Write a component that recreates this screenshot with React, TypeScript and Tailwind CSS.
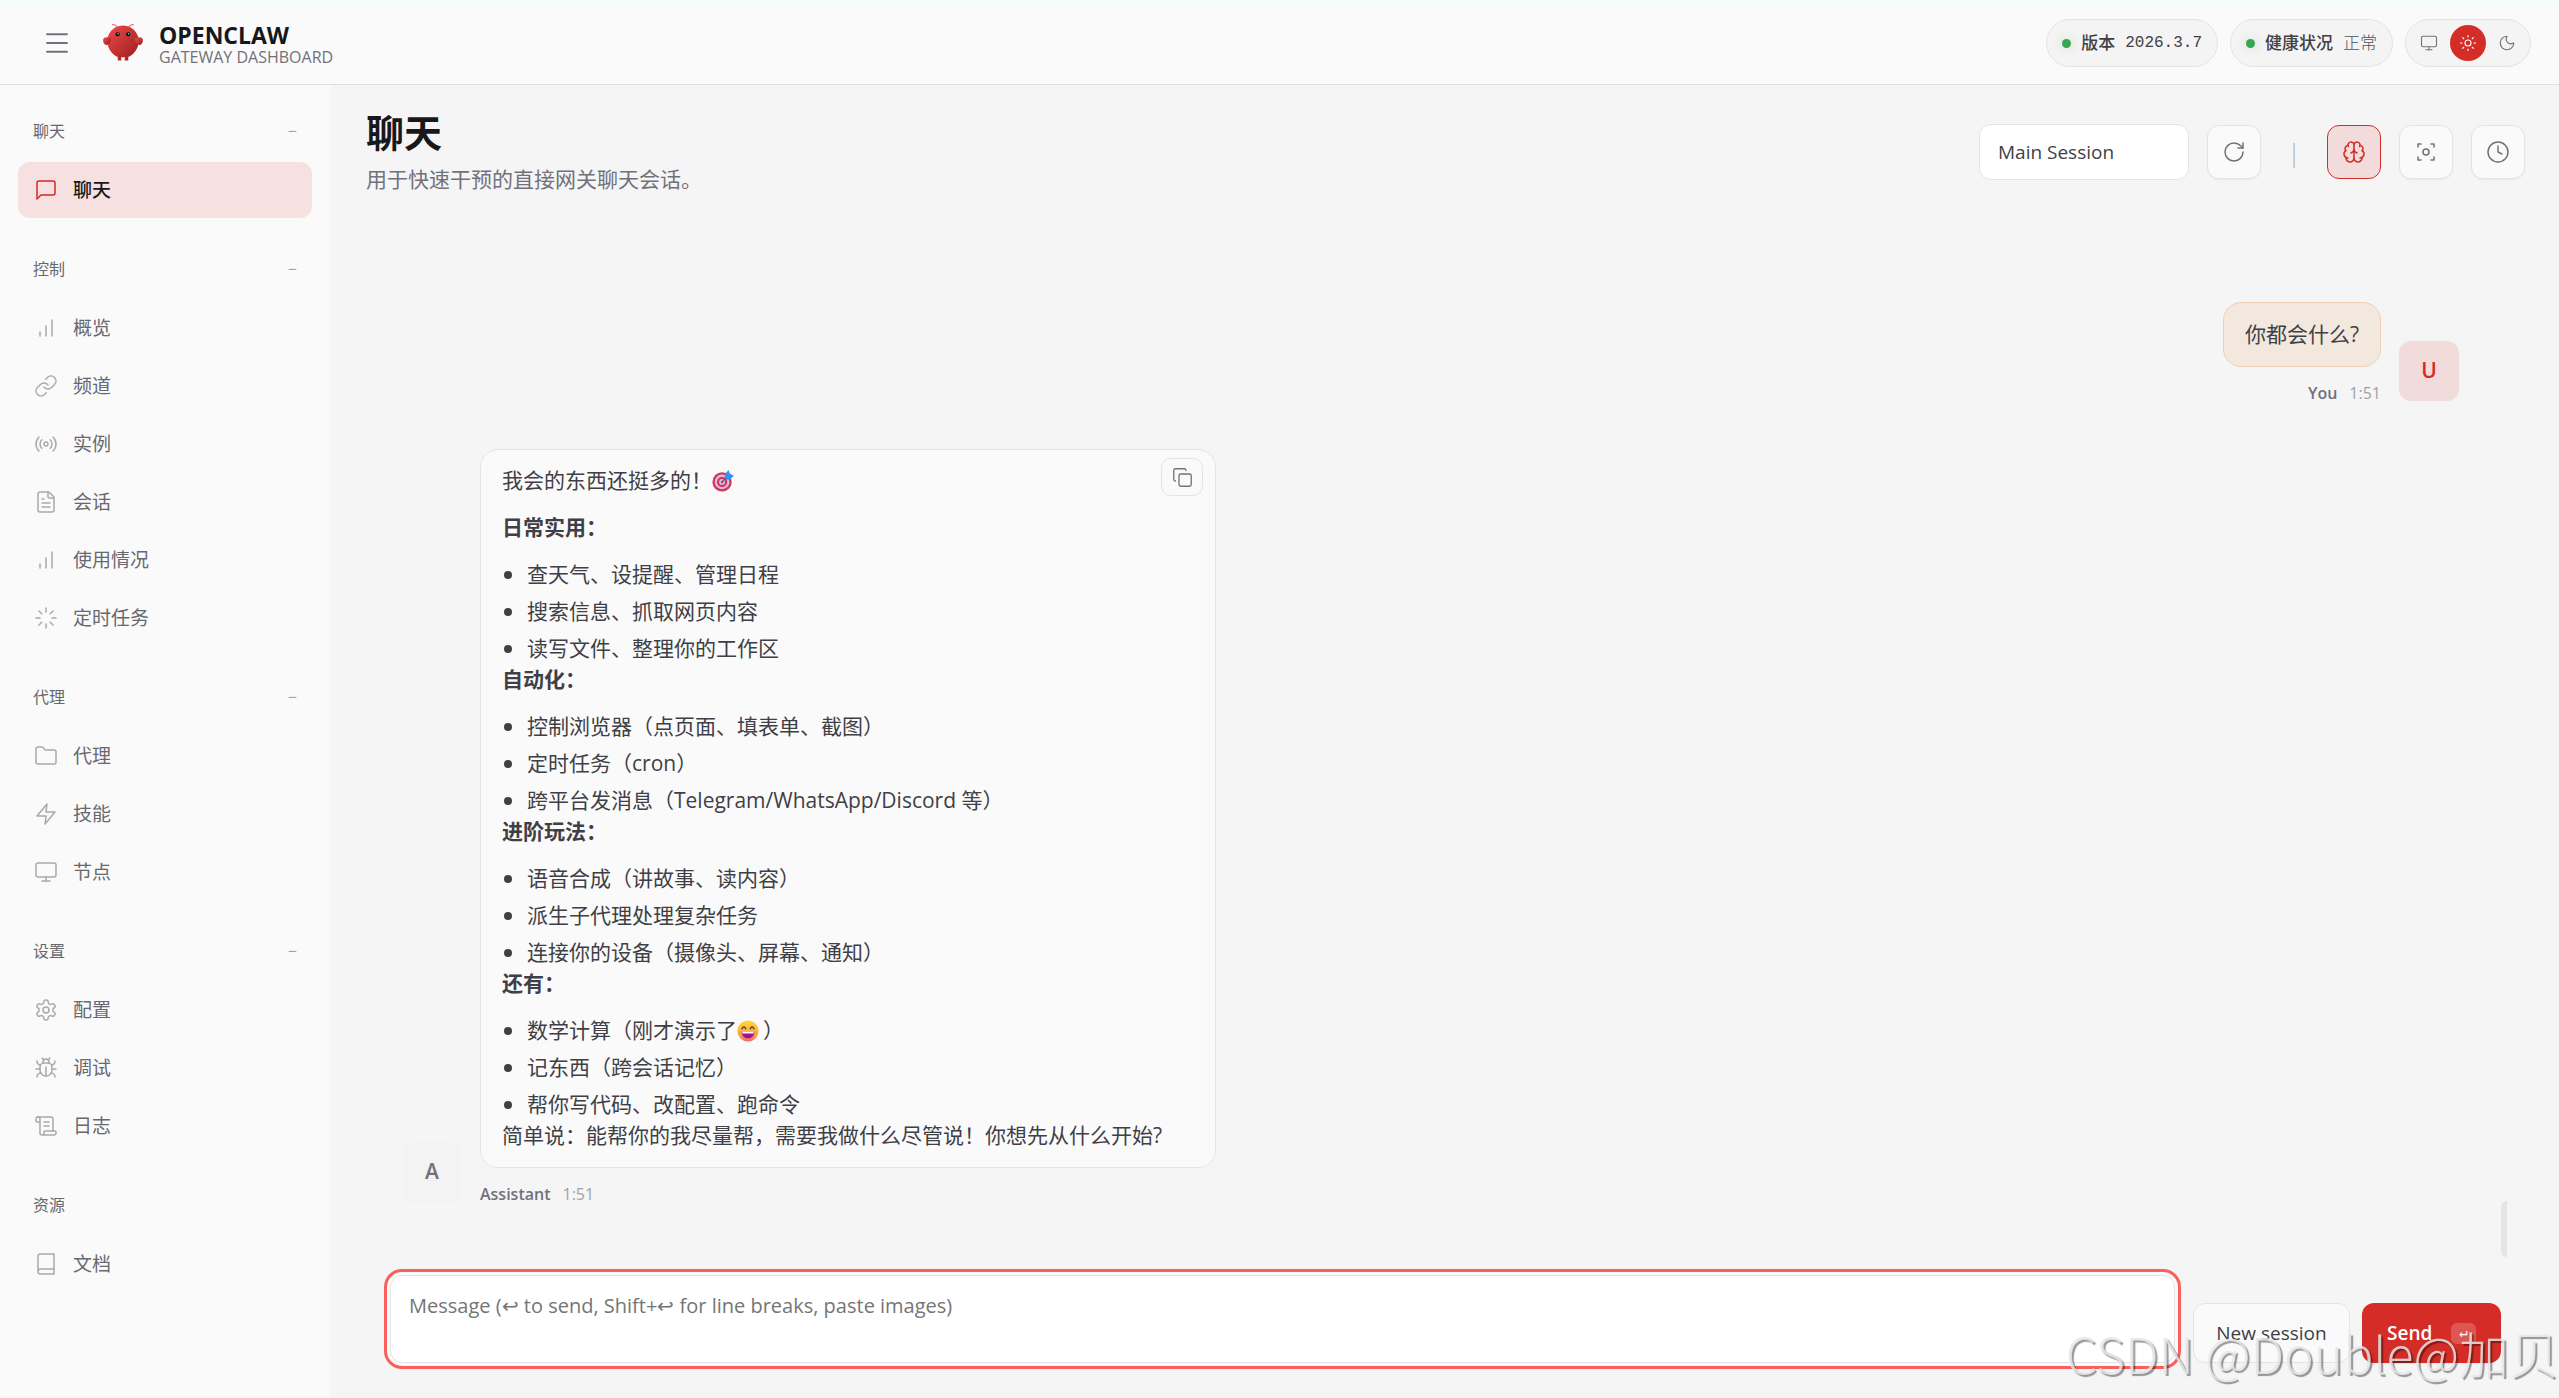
import { useState, type ReactNode } from "react";
import {
  Brain,
  Bug,
  Clock,
  Copy,
  FileText,
  Folder,
  Link,
  Menu,
  Monitor,
  Moon,
  RotateCw,
  ScrollText,
} from "lucide-react";

type IconProps = { className?: string };

function Stroke({ className, children }: IconProps & { children: ReactNode }) {
  return (
    <svg
      viewBox="0 0 24 24"
      fill="none"
      stroke="currentColor"
      strokeWidth={1.5}
      strokeLinecap="round"
      strokeLinejoin="round"
      className={className}
      aria-hidden="true"
    >
      {children}
    </svg>
  );
}

const ChatIcon = (p: IconProps) => (
  <Stroke {...p}>
    <path d="M21 15a2 2 0 0 1-2 2H7l-4 4V5a2 2 0 0 1 2-2h14a2 2 0 0 1 2 2z" />
  </Stroke>
);
const BarsIcon = (p: IconProps) => (
  <Stroke {...p}>
    <path d="M12 20V10M18 20V4M6 20v-4" />
  </Stroke>
);
const LinkIcon = (p: IconProps) => <Link strokeWidth={1.5} {...p} />;
const RadioIcon = (p: IconProps) => (
  <Stroke {...p}>
    <circle cx="12" cy="12" r="2" />
    <path d="M16.24 7.76a6 6 0 0 1 0 8.49m-8.48-.01a6 6 0 0 1 0-8.49m11.31-2.82a10 10 0 0 1 0 14.14m-14.14 0a10 10 0 0 1 0-14.14" />
  </Stroke>
);
const FileIcon = (p: IconProps) => <FileText strokeWidth={1.5} {...p} />;
const LoaderIcon = (p: IconProps) => (
  <Stroke {...p}>
    <path d="M12 2v4M12 18v4M4.93 4.93l2.83 2.83M16.24 16.24l2.83 2.83M2 12h4M18 12h4M4.93 19.07l2.83-2.83M16.24 7.76l2.83-2.83" />
  </Stroke>
);
const FolderIcon = (p: IconProps) => <Folder strokeWidth={1.5} {...p} />;
const ZapIcon = (p: IconProps) => (
  <Stroke {...p}>
    <path d="M13 2 3 14h9l-1 8 10-12h-9z" />
  </Stroke>
);
const MonitorIcon = (p: IconProps) => <Monitor strokeWidth={1.5} {...p} />;
const GearIcon = (p: IconProps) => (
  <Stroke {...p}>
    <path d="M12.22 2h-.44a2 2 0 0 0-2 2v.18a2 2 0 0 1-1 1.73l-.43.25a2 2 0 0 1-2 0l-.15-.08a2 2 0 0 0-2.73.73l-.22.38a2 2 0 0 0 .73 2.73l.15.1a2 2 0 0 1 1 1.72v.51a2 2 0 0 1-1 1.74l-.15.09a2 2 0 0 0-.73 2.73l.22.38a2 2 0 0 0 2.73.73l.15-.08a2 2 0 0 1 2 0l.43.25a2 2 0 0 1 1 1.73V20a2 2 0 0 0 2 2h.44a2 2 0 0 0 2-2v-.18a2 2 0 0 1 1-1.73l.43-.25a2 2 0 0 1 2 0l.15.08a2 2 0 0 0 2.73-.73l.22-.39a2 2 0 0 0-.73-2.73l-.15-.08a2 2 0 0 1-1-1.74v-.5a2 2 0 0 1 1-1.74l.15-.09a2 2 0 0 0 .73-2.73l-.22-.38a2 2 0 0 0-2.73-.73l-.15.08a2 2 0 0 1-2 0l-.43-.25a2 2 0 0 1-1-1.73V4a2 2 0 0 0-2-2z" />
    <circle cx="12" cy="12" r="3" />
  </Stroke>
);
const BugIcon = (p: IconProps) => <Bug strokeWidth={1.5} {...p} />;
const ScrollIcon = (p: IconProps) => <ScrollText strokeWidth={1.5} {...p} />;
const BookIcon = (p: IconProps) => (
  <Stroke {...p}>
    <path d="M4 19.5v-15A2.5 2.5 0 0 1 6.5 2H20v20H6.5a2.5 2.5 0 0 1 0-5H20" />
  </Stroke>
);

function Logo() {
  return (
    <svg viewBox="0 0 120 120" className="size-[42px]" aria-hidden="true">
      <defs>
        <linearGradient id="shell" x1="0%" y1="0%" x2="100%" y2="100%">
          <stop offset="0%" stopColor="#f04a4a" />
          <stop offset="100%" stopColor="#991b1b" />
        </linearGradient>
      </defs>
      <path
        d="M60 10C30 10 15 35 15 55s15 40 30 45v10h10v-10s5 2 10 0v10h10v-10c15-5 30-25 30-45S90 10 60 10Z"
        fill="url(#shell)"
      />
      <path d="M20 45C5 40 0 50 5 60s15 5 20-5c3-7 0-10-5-10Z" fill="url(#shell)" />
      <path d="M100 45c15-5 20 5 15 15s-15 5-20-5c-3-7 0-10 5-10Z" fill="url(#shell)" />
      <path
        d="M45 15Q35 5 30 8M75 15Q85 5 90 8"
        stroke="#f0605f"
        strokeWidth="3"
        strokeLinecap="round"
        fill="none"
      />
      <circle cx="45" cy="35" r="6" fill="#050810" />
      <circle cx="75" cy="35" r="6" fill="#050810" />
      <circle cx="46" cy="34" r="2.5" fill="#00e5cc" />
      <circle cx="76" cy="34" r="2.5" fill="#00e5cc" />
    </svg>
  );
}

function TargetEmoji() {
  return (
    <svg viewBox="0 0 24 24" className="inline-block size-[22px] align-[-4px]" role="img" aria-label="靶心">
      <circle cx="11" cy="13" r="10.5" fill="#d8315b" />
      <circle cx="11" cy="13" r="8" fill="#cfc6dc" />
      <circle cx="11" cy="13" r="5.6" fill="#d8315b" />
      <circle cx="11" cy="13" r="3.2" fill="#cfc6dc" />
      <circle cx="11" cy="13" r="1.4" fill="#d8315b" />
      <path d="M11 13 18 6" stroke="#5b4b8a" strokeWidth="1.4" />
      <path d="m14 8 .5-4L18 0l1 3 1.500 1.500L24 6l-4 4-4 .5z" fill="#3b8ef0" />
    </svg>
  );
}

function GrinEmoji() {
  return (
    <svg viewBox="0 0 24 24" className="mr-1 inline-block size-[22px] align-[-4px]" role="img" aria-label="大笑">
      <defs>
        <linearGradient id="face" x1="0" y1="0" x2="0" y2="1">
          <stop offset="0" stopColor="#ffd83b" />
          <stop offset="0.700" stopColor="#fba13a" />
          <stop offset="1" stopColor="#ee6a6a" />
        </linearGradient>
      </defs>
      <circle cx="12" cy="12" r="11.500" fill="url(#face)" />
      <path
        d="M5.500 9.500Q7.500 5.500 9.500 9.500M14.500 9.500Q16.500 5.500 18.500 9.500"
        stroke="#4b2e3a"
        strokeWidth="1.500"
        strokeLinecap="round"
        fill="none"
      />
      <path d="M5 12.500h14c0 4.500-3 7.500-7 7.500s-7-3-7-7.500Z" fill="#a30f9c" />
      <path d="M5.500 12.500h13l-.5 2.300H6z" fill="#fff" />
    </svg>
  );
}

type NavItem = { label: string; icon: (p: IconProps) => ReactNode; active?: boolean };
type NavGroup = { label: string; collapsible: boolean; items: NavItem[] };

const NAV: NavGroup[] = [
  { label: "聊天", collapsible: true, items: [{ label: "聊天", icon: ChatIcon, active: true }] },
  {
    label: "控制",
    collapsible: true,
    items: [
      { label: "概览", icon: BarsIcon },
      { label: "频道", icon: LinkIcon },
      { label: "实例", icon: RadioIcon },
      { label: "会话", icon: FileIcon },
      { label: "使用情况", icon: BarsIcon },
      { label: "定时任务", icon: LoaderIcon },
    ],
  },
  {
    label: "代理",
    collapsible: true,
    items: [
      { label: "代理", icon: FolderIcon },
      { label: "技能", icon: ZapIcon },
      { label: "节点", icon: MonitorIcon },
    ],
  },
  {
    label: "设置",
    collapsible: true,
    items: [
      { label: "配置", icon: GearIcon },
      { label: "调试", icon: BugIcon },
      { label: "日志", icon: ScrollIcon },
    ],
  },
  { label: "资源", collapsible: false, items: [{ label: "文档", icon: BookIcon }] },
];

function Sidebar() {
  return (
    <nav className="flex w-[330px] shrink-0 flex-col gap-[34px] bg-[#fafafa] px-[18px] pt-[29px]">
      {NAV.map((group) => (
        <section key={group.label} className="flex flex-col gap-3.5">
          {group.collapsible ? (
            <button
              type="button"
              className="flex h-[34px] items-center justify-between px-[15px] text-base text-[#68686f]"
            >
              <span>{group.label}</span>
              <span className="text-[#a1a1aa]">−</span>
            </button>
          ) : (
            <div className="flex h-[34px] items-center px-[15px] text-base text-[#68686f]">{group.label}</div>
          )}
          <div className="flex flex-col gap-0.5">
            {group.items.map(({ label, icon: Icon, active }) => (
              <a
                key={label}
                href="#"
                className={
                  active
                    ? "flex h-14 items-center gap-[15px] rounded-xl bg-[#f6e1e0] px-4 text-[19px] font-medium text-[#18181b]"
                    : "flex h-14 items-center gap-[15px] rounded-xl px-4 text-[19px] text-[#68686f]"
                }
              >
                <Icon className={active ? "size-6 text-[#dc2626]" : "size-6 text-[#a9a9ae]"} />
                {label}
              </a>
            ))}
          </div>
        </section>
      ))}
    </nav>
  );
}

function Topbar() {
  return (
    <header className="flex h-[85px] shrink-0 items-center justify-between border-b border-[#e0e0e2] bg-[#fafafa] pt-0.5 pr-7 pl-[42px] shadow-[inset_0_1px_0_#effdfd]">
      <div className="flex items-center">
        <button type="button" aria-label="菜单" className="text-[#71717a]">
          <Menu className="size-[30px]" strokeWidth={1.5} />
        </button>
        <div className="ml-[30px] flex items-center gap-[15px]">
          <Logo />
          <div className="flex flex-col pt-[3px]">
            <span className="text-[23px] leading-6 font-bold text-[#18181b]">OPENCLAW</span>
            <span className="text-base leading-5 text-[#71717a]">GATEWAY DASHBOARD</span>
          </div>
        </div>
      </div>
      <div className="flex items-center gap-3">
        <div className="flex h-12 items-center gap-2.5 rounded-full border border-[#e4e4e7] bg-[#f4f4f4] px-[15px] text-[#3f3f46]">
          <span className="size-[9px] rounded-full bg-[#36a64f] shadow-[0_0_12px_#36a64f40]" />
          <span className="text-[17px] font-medium">版本</span>
          <span className="font-['Liberation_Mono',monospace] text-base">2026.3.7</span>
        </div>
        <div className="flex h-12 items-center gap-2.5 rounded-full border border-[#e4e4e7] bg-[#f4f4f4] px-[15px] text-[#3f3f46]">
          <span className="size-[9px] rounded-full bg-[#36a64f] shadow-[0_0_12px_#36a64f40]" />
          <span className="text-[17px] font-medium">健康状况</span>
          <span className="text-[17px] font-light text-[#52525b]">正常</span>
        </div>
        <div className="flex h-12 items-center gap-[3px] rounded-full border border-[#e4e4e7] bg-[#f4f4f4] px-[5px] text-[#71717a]">
          <button type="button" aria-label="跟随系统" className="flex size-9 items-center justify-center rounded-full">
            <Monitor className="size-[18px]" strokeWidth={1.5} />
          </button>
          <button
            type="button"
            aria-label="浅色"
            className="flex size-9 items-center justify-center rounded-full bg-[#d42d27] text-white"
          >
            <Stroke className="size-[18px]">
              <circle cx="12" cy="12" r="4" />
              <path d="M12 2v2M12 20v2M4.93 4.93l1.41 1.41M17.66 17.66l1.41 1.41M2 12h2M20 12h2M6.34 17.66l-1.41 1.41M19.07 4.93l-1.41 1.41" />
            </Stroke>
          </button>
          <button type="button" aria-label="深色" className="flex size-9 items-center justify-center rounded-full">
            <Moon className="size-[18px]" strokeWidth={1.5} />
          </button>
        </div>
      </div>
    </header>
  );
}

function ToolButton({ label, active, children }: { label: string; active?: boolean; children: ReactNode }) {
  return (
    <button
      type="button"
      aria-label={label}
      className={
        active
          ? "flex size-[54px] items-center justify-center rounded-xl border border-[#d42d27] bg-[#f1dcdb] text-[#d42d27]"
          : "flex size-[54px] items-center justify-center rounded-xl border border-[#e4e4e7] bg-[#fafafa] text-[#71717a] shadow-xs"
      }
    >
      {children}
    </button>
  );
}

function PageHeader() {
  return (
    <div className="flex items-center justify-between">
      <div>
        <h1 className="text-[38px] leading-[46px] font-bold text-[#18181b]">聊天</h1>
        <p className="mt-2 text-[21px] leading-8 text-[#71717a]">用于快速干预的直接网关聊天会话。</p>
      </div>
      <div className="flex items-center gap-[18px]">
        <select
          aria-label="会话"
          className="h-14 w-[210px] appearance-none rounded-xl border border-[#e4e4e7] bg-white px-[18px] text-[19px] text-[#3f3f46]"
        >
          <option>Main Session</option>
        </select>
        <ToolButton label="刷新">
          <RotateCw className="size-6" strokeWidth={1.5} />
        </ToolButton>
        <span className="w-[30px] text-center text-[26px] font-light text-[#b4b4b8]">|</span>
        <ToolButton label="思考" active>
          <Brain className="size-6" strokeWidth={1.5} />
        </ToolButton>
        <ToolButton label="专注模式">
          <Stroke className="size-6">
            <path d="M4 7V4h3M20 7V4h-3M4 17v3h3M20 17v3h-3" />
            <circle cx="12" cy="12" r="3" />
          </Stroke>
        </ToolButton>
        <ToolButton label="定时会话">
          <Stroke className="size-6">
            <circle cx="12" cy="12" r="10" />
            <path d="M12 6v6l4 2" />
          </Stroke>
        </ToolButton>
      </div>
    </div>
  );
}

const SECTIONS: { title: string; items: ReactNode[] }[] = [
  { title: "日常实用：", items: ["查天气、设提醒、管理日程", "搜索信息、抓取网页内容", "读写文件、整理你的工作区"] },
  {
    title: "自动化：",
    items: ["控制浏览器（点页面、填表单、截图）", "定时任务（cron）", "跨平台发消息（Telegram/WhatsApp/Discord 等）"],
  },
  {
    title: "进阶玩法：",
    items: ["语音合成（讲故事、读内容）", "派生子代理处理复杂任务", "连接你的设备（摄像头、屏幕、通知）"],
  },
  {
    title: "还有：",
    items: [
      <>
        数学计算（刚才演示了
        <GrinEmoji />）
      </>,
      "记东西（跨会话记忆）",
      "帮你写代码、改配置、跑命令",
    ],
  },
];

function Meta({ name }: { name: string }) {
  return (
    <div className="mt-3 flex items-center gap-3 text-base leading-7">
      <span className="font-semibold text-[#71717a]">{name}</span>
      <span className="text-[#a1a1aa]">1:51</span>
    </div>
  );
}

function Thread() {
  return (
    <div className="relative flex flex-1 flex-col gap-[42px] pt-[107px] pr-[66px] pl-9">
      <div className="flex items-end justify-end gap-[18px]">
        <div className="flex flex-col items-end">
          <div className="rounded-[18px] border border-[#f0cfb4] bg-[#f3e8dd] px-[21px] py-4 text-[21px] leading-[31px] text-[#3f3f46]">
            你都会什么?
          </div>
          <Meta name="You" />
        </div>
        <div className="mb-1.5 flex size-[60px] items-center justify-center rounded-xl bg-[#f1dcdb] text-[21px] font-semibold text-[#dc2626]">
          U
        </div>
      </div>
      <div className="flex items-end gap-[18px]">
        <div className="mb-1.5 flex size-[60px] items-center justify-center rounded-xl bg-[#f3f3f3] text-[21px] font-semibold text-[#71717a]">
          A
        </div>
        <div className="flex flex-col items-start">
          <div className="relative rounded-[18px] border border-[#e4e4e7] bg-[#fafafa] pt-[15px] pr-[53px] pb-4 pl-[21px] text-[21px] leading-[31px] text-[#3f3f46]">
            <button
              type="button"
              aria-label="复制"
              className="absolute top-2 right-3 flex h-[38px] w-[42px] items-center justify-center rounded-[10px] border border-[#e4e4e7] text-[#71717a]"
            >
              <Copy className="size-[21px]" strokeWidth={1.5} />
            </button>
            <p className="mb-4">
              我会的东西还挺多的！
              <TargetEmoji />
            </p>
            {SECTIONS.map((section) => (
              <div key={section.title}>
                <p className="mb-4 font-bold">{section.title}</p>
                <ul className="space-y-1.5">
                  {section.items.map((item, i) => (
                    <li key={i} className="flex items-center gap-[15px] pl-0.5">
                      <span className="size-2 rounded-full bg-[#3f3f46]" />
                      <span>{item}</span>
                    </li>
                  ))}
                </ul>
              </div>
            ))}
            <p>简单说：能帮你的我尽量帮，需要我做什么尽管说！你想先从什么开始?</p>
          </div>
          <Meta name="Assistant" />
        </div>
      </div>
      <div className="absolute right-[18px] bottom-0 h-14 w-1.5 rounded-l-md bg-[#e4e4e6]" />
    </div>
  );
}

function Composer() {
  const [draft, setDraft] = useState("");
  return (
    <form className="mx-6 mt-[18px] mb-[35px] flex items-end" onSubmit={(e) => e.preventDefault()}>
      <textarea
        aria-label="Message"
        value={draft}
        onChange={(e) => setDraft(e.target.value)}
        placeholder="Message (↩ to send, Shift+↩ for line breaks, paste images)"
        className="block h-[88px] min-w-0 flex-1 resize-none rounded-xl border border-[#e4e4e7] bg-white px-[18px] py-3.5 text-[20px] leading-8 text-[#3f3f46] shadow-[0_0_0_3px_#fafafa,0_0_0_6px_#f9605c] outline-none placeholder:text-[#757575]"
      />
      <button
        type="button"
        className="ml-[18px] h-[60px] w-[157px] rounded-xl border border-[#e4e4e7] bg-[#fafafa] text-[19px] font-medium text-[#3f3f46]"
      >
        New session
      </button>
      <button
        type="submit"
        className="ml-3 flex h-[60px] w-[139px] items-center justify-between rounded-xl bg-[#d42d27] px-[25px] text-[19px] font-semibold text-white shadow-xs"
      >
        Send
        <kbd className="flex h-[21px] w-[25px] items-center justify-center rounded-md bg-white/20 font-['Liberation_Mono',monospace] text-sm font-normal">
          ↵
        </kbd>
      </button>
    </form>
  );
}

export default function App() {
  return (
    <div className="relative flex min-h-screen flex-col overflow-hidden bg-[#f5f5f5] font-['Open_Sans','Noto_Sans_CJK_SC',sans-serif]">
      <Topbar />
      <div className="flex flex-1">
        <Sidebar />
        <main className="flex min-w-0 flex-1 flex-col pt-6 pr-[34px] pl-9">
          <PageHeader />
          <Thread />
          <Composer />
        </main>
      </div>
      <div className="pointer-events-none absolute right-0 bottom-2 font-['Noto_Sans_CJK_SC',sans-serif] text-[50px] leading-[76px] font-light whitespace-nowrap text-[#e6e6e6]/85 [text-shadow:2px_2px_1px_#00000066]">
        CSDN @Double@加贝
      </div>
    </div>
  );
}
